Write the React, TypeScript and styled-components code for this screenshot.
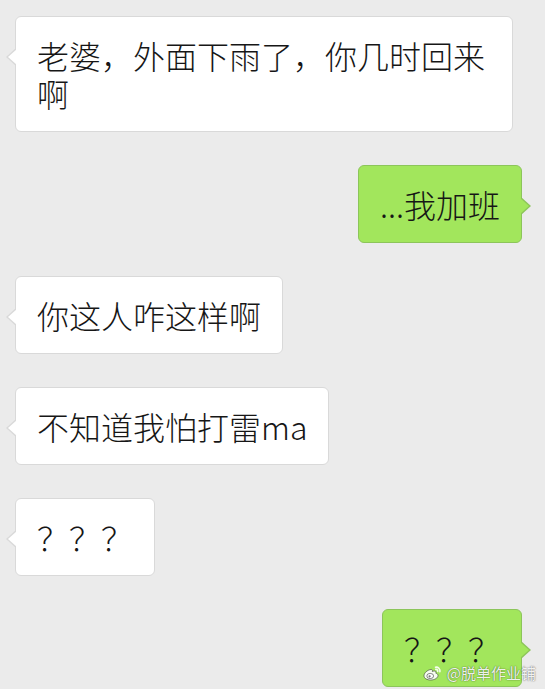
import styled, { createGlobalStyle, css } from 'styled-components';

const GlobalStyle = createGlobalStyle`
  html, body {
    margin: 0;
    padding: 0;
    background: #ebebeb;
    overflow: hidden;
  }
  body {
    font-family: "Noto Sans CJK SC", "Noto Sans", sans-serif;
  }
`;

type Side = 'left' | 'right';

const messages: { side: Side; text: string }[] = [
  { side: 'left', text: '老婆，外面下雨了，你几时回来啊' },
  { side: 'right', text: '...我加班' },
  { side: 'left', text: '你这人咋这样啊' },
  { side: 'left', text: '不知道我怕打雷ma' },
  { side: 'left', text: '？？？' },
  { side: 'right', text: '？？？' },
];

const bubbleColors = {
  left: { bg: '#ffffff', border: '#d9d9d9' },
  right: { bg: '#a2e65c', border: '#8cc55a' },
};

const Chat = styled.div`
  position: relative;
  width: 545px;
  height: 689px;
  box-sizing: border-box;
  padding: 16px 23px 0 15px;
  display: flex;
  flex-direction: column;
  gap: 33px;
`;

const Row = styled.div<{ $side: Side }>`
  display: flex;
  justify-content: ${(p) => (p.$side === 'left' ? 'flex-start' : 'flex-end')};
`;

const Bubble = styled.div<{ $side: Side }>`
  position: relative;
  box-sizing: border-box;
  max-width: 498px;
  padding: 19px 21px;
  border-radius: 6px;
  font-size: 32px;
  font-weight: 300;
  line-height: 38px;
  color: #161616;
  background: ${(p) => bubbleColors[p.$side].bg};
  border: 1px solid ${(p) => bubbleColors[p.$side].border};
  word-break: break-all;

  &::before,
  &::after {
    content: '';
    position: absolute;
    top: 31px;
    width: 0;
    height: 0;
    border-style: solid;
  }

  ${(p) =>
    p.$side === 'left'
      ? css`
          &::before {
            left: -10px;
            border-width: 9px 10px 9px 0;
            border-color: transparent ${bubbleColors.left.border} transparent transparent;
          }
          &::after {
            left: -8px;
            top: 32px;
            border-width: 8px 9px 8px 0;
            border-color: transparent ${bubbleColors.left.bg} transparent transparent;
          }
        `
      : css`
          &::before {
            right: -10px;
            border-width: 9px 0 9px 10px;
            border-color: transparent transparent transparent ${bubbleColors.right.border};
          }
          &::after {
            right: -8px;
            top: 32px;
            border-width: 8px 0 8px 9px;
            border-color: transparent transparent transparent ${bubbleColors.right.bg};
          }
        `}
`;

const Watermark = styled.div`
  position: absolute;
  right: 9px;
  bottom: 8px;
  display: flex;
  align-items: center;
  gap: 4px;
  font-size: 15px;
  line-height: 17px;
  color: rgba(255, 255, 255, 0.92);
  text-shadow: 0 0 1px rgba(0, 0, 0, 0.55), 0 0 2px rgba(0, 0, 0, 0.25);
  font-family: "Noto Sans CJK SC", sans-serif;
`;

const WeiboLogo = () => (
  <svg width="20" height="16" viewBox="0 0 20 16">
    <g fill="rgba(255,255,255,0.9)" stroke="rgba(60,60,60,0.6)" strokeWidth="1">
      <path d="M8 4.5c-3.5 0.4-7 3.4-7 6.3C1 13.4 4 15 7.6 15c4.4 0 7.4-2.3 7.4-4.5 0-1.4-1.2-2-2.2-2.3 0.6-1.6-0.1-2.5-2-2.1-0.9 0.2-1.5 0.5-1.5 0.5 0.4-1.4-0.1-2.3-1.3-2.1z" />
      <ellipse cx="7.2" cy="11" rx="3.4" ry="2.6" />
    </g>
    <circle cx="6.6" cy="11.3" r="1.1" fill="rgba(60,60,60,0.7)" />
    <g fill="none" stroke="rgba(255,255,255,0.9)" strokeWidth="1.6" strokeLinecap="round">
      <path d="M12.5 2.2c2.6-0.5 5 1.7 4.4 4.5" />
      <path d="M12.8 4.4c1.2-0.2 2.2 0.8 1.9 2" />
    </g>
  </svg>
);

export default function App() {
  return (
    <>
      <GlobalStyle />
      <Chat>
        {messages.map((m, i) => (
          <Row key={i} $side={m.side}>
            <Bubble $side={m.side}>{m.text}</Bubble>
          </Row>
        ))}
        <Watermark>
          <WeiboLogo />
          <span>@脱单作业铺</span>
        </Watermark>
      </Chat>
    </>
  );
}
